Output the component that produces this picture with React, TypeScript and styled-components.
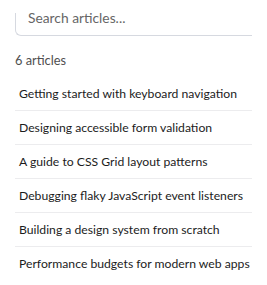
import styled, { createGlobalStyle } from "styled-components";

const articles = [
  "Getting started with keyboard navigation",
  "Designing accessible form validation",
  "A guide to CSS Grid layout patterns",
  "Debugging flaky JavaScript event listeners",
  "Building a design system from scratch",
  "Performance budgets for modern web apps",
];

const GlobalStyle = createGlobalStyle`
  html, body {
    margin: 0;
    background: #ffffff;
  }
  body {
    font-family: Lato, "Noto Sans", sans-serif;
  }
`;

const Page = styled.div`
  width: 267px;
  height: 285px;
  overflow: hidden;
  padding-left: 15px;
  box-sizing: border-box;
`;

const Panel = styled.div`
  width: 237px;
  overflow: hidden;
`;

const SearchField = styled.div`
  width: 260px;
  height: 36px;
  box-sizing: border-box;
  border-left: 1px solid #d6d9e0;
  border-bottom: 1px solid #d6d9e0;
  border-bottom-left-radius: 6px;
  clip-path: polygon(0 13px, 2px 13px, 2px 0, 100% 0, 100% 100%, 0 100%);
  display: flex;
  align-items: flex-start;
`;

const SearchInput = styled.input`
  border: none;
  outline: none;
  background: transparent;
  width: 100%;
  padding: 9px 0 0 12px;
  font-family: inherit;
  font-size: 13.8px;
  color: #222;

  &::placeholder {
    color: #666666;
  }
`;

const Count = styled.div`
  margin-top: 15px;
  font-size: 12.8px;
  line-height: 18px;
  color: #4f4f4f;
`;

const List = styled.ul`
  list-style: none;
  margin: 8px 0 0;
  padding: 0;
`;

const Row = styled.li<{ $last?: boolean }>`
  height: 33px;
  display: flex;
  align-items: center;
  padding-left: 4px;
  border-bottom: ${(p) => (p.$last ? "none" : "1px solid #ececee")};
  font-size: 12.2px;
  color: #1c1c1c;
  white-space: nowrap;
`;

export default function App() {
  return (
    <>
      <GlobalStyle />
      <Page>
        <Panel>
          <SearchField>
            <SearchInput placeholder="Search articles..." />
          </SearchField>
          <Count>{articles.length} articles</Count>
          <List>
            {articles.map((title, i) => (
              <Row key={title} $last={i === articles.length - 1}>
                {title}
              </Row>
            ))}
          </List>
        </Panel>
      </Page>
    </>
  );
}
